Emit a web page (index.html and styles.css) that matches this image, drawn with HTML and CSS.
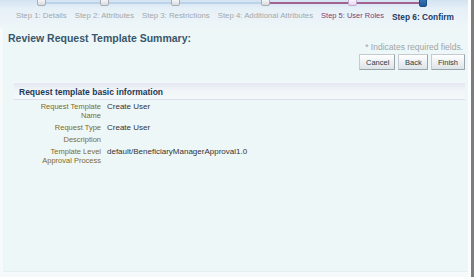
FILE: index.html
```html
<!DOCTYPE html>
<html lang="en">
  <head>
    <meta charset="UTF-8" />
    <meta name="viewport" content="width=device-width, initial-scale=1.0" />
    <title>Review Request Template</title>
    <link rel="stylesheet" href="styles.css">
  </head>
  <body>
    <div class="page">
      <div class="main">
        <div class="train">
          <div class="step"><span class="node"></span><span class="label">Step 1: Details</span></div>
          <div class="step"><span class="node"></span><span class="label">Step 2: Attributes</span></div>
          <div class="step"><span class="node"></span><span class="label">Step 3: Restrictions</span></div>
          <div class="step"><span class="node"></span><span class="label">Step 4: Additional Attributes</span></div>
          <div class="step visited"><span class="node"></span><span class="label">Step 5: User Roles</span></div>
          <div class="step current"><span class="node"></span><span class="label">Step 6: Confirm</span></div>
        </div>
        <div class="panel">
          <h1 class="title">Review Request Template Summary:</h1>
          <p class="req">* Indicates required fields.</p>
          <div class="buttons">
            <button>Cancel</button>
            <button>Back</button>
            <button>Finish</button>
          </div>
          <div class="section">
            <h2>Request template basic information</h2>
            <div class="form">
              <div class="lbl">Request Template Name</div>
              <div class="val">Create User</div>
              <div class="lbl">Request Type</div>
              <div class="val">Create User</div>
              <div class="lbl">Description</div>
              <div class="val"></div>
              <div class="lbl">Template Level Approval Process</div>
              <div class="val">default/BeneficiaryManagerApproval1.0</div>
            </div>
          </div>
        </div>
      </div>
      <div class="scroll"></div>
    </div>
  </body>
</html>
```

FILE: styles.css
```css
* {
  box-sizing: border-box;
  padding: 0;
  margin: 0;
}
body {
  font-family: "Liberation Sans", Arial, sans-serif;
  background-color: #f6fafb;
  color: #333;
  overflow: hidden;
}
.page {
  display: flex;
  height: 100vh;
}
.main {
  flex: 1;
  display: flex;
  flex-direction: column;
  border-right: 3px solid #fbfdfd;
}
.scroll {
  width: 3px;
  background-color: #7b7d7f;
}

/* train */
.train {
  height: 28px;
  display: flex;
  gap: 8px;
  padding-left: 16px;
  background:
    linear-gradient(to right, transparent 43px, #bcd2e8 43px, #bcd2e8 266px, #a0628f 266px, #a0628f 420px, transparent 420px) 0 2px / 100% 2px no-repeat,
    linear-gradient(#d3e3f1, #e6f0f7 9px, #eef6f8 28px);
}
.step {
  display: flex;
  flex-direction: column;
  align-items: center;
}
.node {
  width: 9px;
  height: 9px;
  margin-top: -3px;
  border: 1px solid #a9adb2;
  border-radius: 2px;
  background: linear-gradient(#ffffff, #d9dcdf);
}
.step .label {
  margin-top: 5px;
  font-size: 7.8px;
  line-height: 10px;
  color: #a3a8ab;
  white-space: nowrap;
}
.step.visited .node {
  border-color: #c4a8d2;
  background: linear-gradient(#ffffff, #e6d6ee);
}
.step.visited .label {
  color: #7c3f78;
  font-size: 7.5px;
}
.step.current .node {
  width: 8px;
  height: 10px;
  border-color: #1b4f86;
  background: linear-gradient(#3b7bbd, #1d5a98);
}
.step.current .label {
  color: #1d3a66;
  font-size: 8.3px;
  font-weight: bold;
}

/* content */
.panel {
  flex: 1;
  margin: 0 0 5px 3px;
  padding: 5px 3px 0 5px;
  background-color: #eef7f7;
  border-bottom: 1px solid #e6eeee;
}
.title {
  font-size: 10.5px;
  line-height: 10px;
  color: #38566c;
}
.req {
  text-align: right;
  padding-right: 2px;
  font-size: 8.5px;
  line-height: 9px;
  color: #a0a4a6;
}
.buttons {
  display: flex;
  justify-content: flex-end;
  gap: 3px;
  margin-top: 2px;
}
.buttons button {
  height: 16px;
  padding: 0 6px;
  font-family: "Liberation Sans", Arial, sans-serif;
  font-size: 7.5px;
  color: #2a3a44;
  border: 1px solid #c3cbd1;
  border-right-color: #9aa4ac;
  border-bottom-color: #9aa4ac;
  border-radius: 1px;
  background: linear-gradient(#ffffff, #e9eef1 60%, #dde4e8);
}
.buttons button:nth-child(1) {
  width: 36px;
}
.buttons button:nth-child(2) {
  width: 30px;
}
.buttons button:nth-child(3) {
  width: 34px;
}

/* section */
.section {
  margin: 12px 0 0 6px;
}
.section h2 {
  height: 18px;
  padding-left: 5px;
  font-size: 8.5px;
  line-height: 18px;
  color: #1b3a5a;
  border-top: 1px solid #f4f6fa;
  border-bottom: 1px solid #dcdfea;
  background: linear-gradient(#e4e6f0, #f1f4f8 45%, #f5f9fa);
}
.form {
  display: grid;
  grid-template-columns: 66px 1fr;
  column-gap: 6px;
  padding-left: 21px;
}
.lbl,
.val {
  padding: 1.5px 0;
  line-height: 9px;
}
.lbl {
  text-align: right;
  font-size: 7.5px;
  color: #806a2e;
}
.val {
  font-size: 8px;
  color: #333;
}
```
